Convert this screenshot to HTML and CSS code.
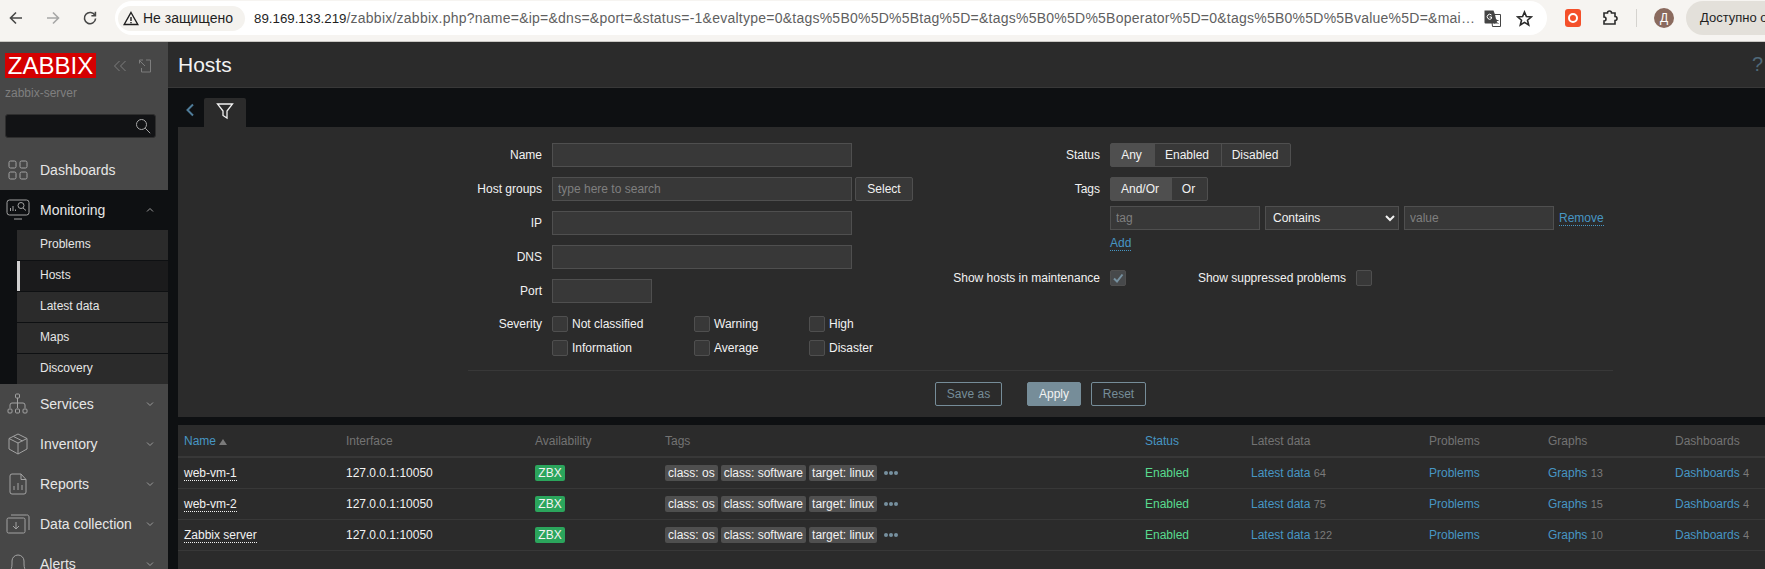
FILE: index.html
```html
<!DOCTYPE html>
<html lang="ru">

<head>
    <meta charset="UTF-8">
    <title>Hosts</title>
    <link rel="stylesheet" href="styles.css">
</head>

<body>
    <!-- browser toolbar -->
    <div class="browser-bar">
        <div class="browser-nav">
            <svg class="nav-arrow" width="16" height="16" viewBox="0 0 16 16"><path d="M14 8H2.5M8 2.5 2.5 8 8 13.5" /></svg>
            <svg class="nav-arrow nav-arrow-off" width="16" height="16" viewBox="0 0 16 16"><path d="M2 8h11.5M8 2.5 13.5 8 8 13.5" /></svg>
            <svg class="nav-arrow" width="16" height="16" viewBox="0 0 16 16"><path d="M13 5.500A5.600 5.600 0 1 0 13.600 8.500M13.400 1.800v4h-4" /></svg>
        </div>
        <div class="omnibox">
            <div class="chip">
                <svg width="16" height="15" viewBox="0 0 16 15"><path class="warn" d="M8 1.500 14.800 13.500H1.200ZM8 6v4M8 11v1.200" /></svg>
                <span>Не защищено</span>
            </div>
            <div class="url"><b>89.169.133.219</b>/zabbix/zabbix.php?name=&amp;ip=&amp;dns=&amp;port=&amp;status=-1&amp;evaltype=0&amp;tags%5B0%5D%5Btag%5D=&amp;tags%5B0%5D%5Boperator%5D=0&amp;tags%5B0%5D%5Bvalue%5D=&amp;mai…</div>
            <svg class="omni-icon" width="17" height="17" viewBox="0 0 17 17">
                <path fill="#fff" stroke="#444" d="M7 4.500h9.500v12H8.500Z" />
                <path fill="#444" d="M0.500 0.500h9l1.500 4 2 9H1.500a1 1 0 0 1-1-1Z" />
                <path fill="none" stroke="#fff" d="M7.500 5a2.500 2.500 0 1 0 0 3.500V7H5.500" />
                <path fill="none" stroke="#444" d="M10.500 10.500h4M12.500 9.500c0 2-1 3.500-2 4M11.500 11c.5 1.200 1.500 2 3 2.500" />
            </svg>
            <svg class="omni-icon star" width="17" height="17" viewBox="0 0 17 17"><path d="M8.500 2 10.400 6.600 15.300 7 11.500 10.200 12.700 15 8.500 12.400 4.300 15 5.500 10.200 1.700 7 6.600 6.600Z" /></svg>
        </div>
        <div class="browser-tools">
            <div class="ext-red"><span></span></div>
            <svg class="puzzle" width="18" height="18" viewBox="0 0 18 18"><path d="M3 4h3.500a2 2 0 0 1 4 0H14v3.500a2 2 0 0 1 0 4V15H3v-3a2 2 0 0 0 0-4Z" /></svg>
            <div class="tool-sep"></div>
            <div class="avatar">Д</div>
            <div class="update-pill">Доступно обновление</div>
        </div>
    </div>

    <div class="app">
        <aside class="sidebar">
            <div class="logo-row">
                <div class="logo">ZABBIX</div>
                <svg class="logo-icon logo-collapse" width="14" height="14" viewBox="0 0 14 14"><path d="M6.500 2 1.500 7l5 5M12.500 2l-5 5 5 5" /></svg>
                <svg class="logo-icon" width="14" height="14" viewBox="0 0 14 14"><path d="M5 1H1.500v3.500M1.500 1.500 7 7M8 1h4.500v12h-9V9" /></svg>
            </div>
            <div class="server-name">zabbix-server</div>
            <div class="search-box">
                <svg width="16" height="16" viewBox="0 0 16 16"><circle cx="6.500" cy="6.500" r="5" /><path d="m10.200 10.200 5 5" /></svg>
            </div>

            <nav class="menu">
                <div class="menu-item">
                    <svg class="menu-icon" width="22" height="22" viewBox="0 0 22 22"><rect x="2" y="2" width="7" height="7" rx="1.500" /><rect x="13" y="2" width="7" height="7" rx="1.500" /><rect x="2" y="13" width="7" height="7" rx="1.500" /><rect x="13" y="13" width="7" height="7" rx="1.500" /></svg>
                    <span>Dashboards</span>
                </div>
                <div class="menu-item menu-item-open">
                    <svg class="menu-icon" width="24" height="22" viewBox="0 0 24 22"><rect x="1" y="1" width="22" height="15" rx="2.500" /><path d="M8 20h8M4.500 12V9M7 12V7M9.500 12v-1.500" /><circle cx="15" cy="6.500" r="3" /><path d="m17 9 3 2.500" /></svg>
                    <span>Monitoring</span>
                    <svg class="chevron" width="8" height="6" viewBox="0 0 8 6"><path d="M1 4.500 4 1.500l3 3" /></svg>
                </div>
                <div class="submenu">
                    <a class="submenu-item">Problems</a>
                    <a class="submenu-item submenu-item-active">Hosts</a>
                    <a class="submenu-item">Latest data</a>
                    <a class="submenu-item">Maps</a>
                    <a class="submenu-item">Discovery</a>
                </div>
                <div class="menu-item">
                    <svg class="menu-icon" width="24" height="22" viewBox="0 0 24 22"><rect x="9.500" y="1" width="4" height="4" rx="1" /><path d="M11.500 5v5M4 15v-3a2 2 0 0 1 2-2h11a2 2 0 0 1 2 2v3M11.500 10v5" /><rect x="2" y="16" width="4" height="4" rx="1" /><rect x="9.500" y="16" width="4" height="4" rx="1" /><rect x="17" y="16" width="4" height="4" rx="1" /></svg>
                    <span>Services</span>
                    <svg class="chevron" width="8" height="6" viewBox="0 0 8 6"><path d="M1 1.500 4 4.500l3-3" /></svg>
                </div>
                <div class="menu-item">
                    <svg class="menu-icon" width="24" height="24" viewBox="0 0 24 24"><path d="M12 2 21 6.500V17L12 22 3 17V6.500ZM3 6.500 12 11 21 6.500M12 11v11M7.500 4.500 16.500 9" /></svg>
                    <span>Inventory</span>
                    <svg class="chevron" width="8" height="6" viewBox="0 0 8 6"><path d="M1 1.500 4 4.500l3-3" /></svg>
                </div>
                <div class="menu-item">
                    <svg class="menu-icon" width="24" height="24" viewBox="0 0 24 24"><path d="M6 2h9l5 5.500V20a2 2 0 0 1-2 2H6a2 2 0 0 1-2-2V4a2 2 0 0 1 2-2ZM15 2v5.500h5M8 18v-4M12 18v-7M16 18v-5" /></svg>
                    <span>Reports</span>
                    <svg class="chevron" width="8" height="6" viewBox="0 0 8 6"><path d="M1 1.500 4 4.500l3-3" /></svg>
                </div>
                <div class="menu-item">
                    <svg class="menu-icon" width="24" height="22" viewBox="0 0 24 22"><rect x="1" y="5" width="18" height="15" rx="1.500" /><path d="M5 2h15.500A2 2 0 0 1 23 4v13M10 9v7M7 13l3 3 3-3" /></svg>
                    <span>Data collection</span>
                    <svg class="chevron" width="8" height="6" viewBox="0 0 8 6"><path d="M1 1.500 4 4.500l3-3" /></svg>
                </div>
                <div class="menu-item">
                    <svg class="menu-icon" width="24" height="24" viewBox="0 0 24 24"><path d="M3 19c2-1 3-3 3-7V9a6 6 0 0 1 12 0v3c0 4 1 6 3 7ZM10 22h4" /></svg>
                    <span>Alerts</span>
                    <svg class="chevron" width="8" height="6" viewBox="0 0 8 6"><path d="M1 1.500 4 4.500l3-3" /></svg>
                </div>
            </nav>
        </aside>

        <main class="content">
            <header class="page-header">
                <h1>Hosts</h1>
                <span class="help">?</span>
            </header>

            <div class="filter-tabs">
                <svg class="tab-back" width="10" height="14" viewBox="0 0 10 14"><path d="M8 1.500 2.500 7 8 12.500" /></svg>
                <div class="filter-tab">
                    <svg width="18" height="18" viewBox="0 0 18 18"><path d="M1.500 2h15L11 9v7l-4-2.500V9Z" /></svg>
                </div>
            </div>

            <section class="filter-panel">
                <form class="filter-form">
                    <div class="filter-cols">
                        <div class="col-left">
                            <div class="form-row">
                                <label class="form-label">Name</label>
                                <input class="field field-wide" type="text">
                            </div>
                            <div class="form-row form-row-tight">
                                <label class="form-label">Host groups</label>
                                <input class="field field-wide" type="text" placeholder="type here to search">
                                <button class="btn-select" type="button">Select</button>
                            </div>
                            <div class="form-row">
                                <label class="form-label">IP</label>
                                <input class="field field-wide" type="text">
                            </div>
                            <div class="form-row">
                                <label class="form-label">DNS</label>
                                <input class="field field-wide" type="text">
                            </div>
                            <div class="form-row">
                                <label class="form-label">Port</label>
                                <input class="field field-port" type="text">
                            </div>
                            <div class="form-row form-row-severity">
                                <label class="form-label">Severity</label>
                                <div class="severity-grid">
                                    <div class="check"><i class="box"></i>Not classified</div>
                                    <div class="check"><i class="box"></i>Warning</div>
                                    <div class="check"><i class="box"></i>High</div>
                                    <div class="check"><i class="box"></i>Information</div>
                                    <div class="check"><i class="box"></i>Average</div>
                                    <div class="check"><i class="box"></i>Disaster</div>
                                </div>
                            </div>
                        </div>

                        <div class="col-right">
                            <div class="form-row">
                                <label class="form-label">Status</label>
                                <div class="segmented">
                                    <span class="seg seg-on seg-any">Any</span>
                                    <span class="seg seg-enabled">Enabled</span>
                                    <span class="seg seg-disabled">Disabled</span>
                                </div>
                            </div>
                            <div class="form-row form-row-tags">
                                <label class="form-label">Tags</label>
                                <div class="segmented">
                                    <span class="seg seg-on seg-andor">And/Or</span>
                                    <span class="seg seg-or">Or</span>
                                </div>
                            </div>
                            <div class="form-row form-row-tags">
                                <span class="form-label"></span>
                                <div class="tag-filter">
                                    <input class="field field-tag" type="text" placeholder="tag">
                                    <select class="field field-op">
                                        <option>Contains</option>
                                    </select>
                                    <input class="field field-tag" type="text" placeholder="value">
                                    <a class="dotted-link">Remove</a>
                                </div>
                            </div>
                            <div class="form-row add-row">
                                <span class="form-label"></span>
                                <a class="dotted-link">Add</a>
                            </div>
                            <div class="form-row maint-row">
                                <label class="form-label">Show hosts in maintenance</label>
                                <i class="box box-checked">
                                    <svg width="12" height="12" viewBox="0 0 12 12"><path d="M2 6.500 5 9.500 10.500 2.500" /></svg>
                                </i>
                                <label class="suppressed-label">Show suppressed problems</label>
                                <i class="box"></i>
                            </div>
                        </div>
                    </div>

                    <div class="filter-buttons">
                        <button class="btn-outline btn-saveas" type="button">Save as</button>
                        <button class="btn-apply" type="button">Apply</button>
                        <button class="btn-outline btn-reset" type="button">Reset</button>
                    </div>
                </form>
            </section>

            <section class="hosts-list">
                <table class="hosts-table">
                    <colgroup>
                        <col class="c-name"><col class="c-iface"><col class="c-avail"><col class="c-tags"><col class="c-status"><col class="c-latest"><col class="c-problems"><col class="c-graphs"><col>
                    </colgroup>
                    <thead>
                        <tr>
                            <th class="sort-link">Name <i class="sort-up"></i></th>
                            <th>Interface</th>
                            <th>Availability</th>
                            <th>Tags</th>
                            <th class="sort-link">Status</th>
                            <th>Latest data</th>
                            <th>Problems</th>
                            <th>Graphs</th>
                            <th>Dashboards</th>
                        </tr>
                    </thead>
                    <tbody>
                        <tr>
                            <td><a class="host-link">web-vm-1</a></td>
                            <td>127.0.0.1:10050</td>
                            <td><span class="zbx">ZBX</span></td>
                            <td class="tags-cell"><span class="tag">class: os</span><span class="tag">class: software</span><span class="tag">target: linux</span><span class="more"><i></i><i></i><i></i></span></td>
                            <td class="enabled">Enabled</td>
                            <td><a class="link">Latest data</a> <sup>64</sup></td>
                            <td><a class="link">Problems</a></td>
                            <td><a class="link">Graphs</a> <sup>13</sup></td>
                            <td><a class="link">Dashboards</a> <sup>4</sup></td>
                        </tr>
                        <tr>
                            <td><a class="host-link">web-vm-2</a></td>
                            <td>127.0.0.1:10050</td>
                            <td><span class="zbx">ZBX</span></td>
                            <td class="tags-cell"><span class="tag">class: os</span><span class="tag">class: software</span><span class="tag">target: linux</span><span class="more"><i></i><i></i><i></i></span></td>
                            <td class="enabled">Enabled</td>
                            <td><a class="link">Latest data</a> <sup>75</sup></td>
                            <td><a class="link">Problems</a></td>
                            <td><a class="link">Graphs</a> <sup>15</sup></td>
                            <td><a class="link">Dashboards</a> <sup>4</sup></td>
                        </tr>
                        <tr>
                            <td><a class="host-link">Zabbix server</a></td>
                            <td>127.0.0.1:10050</td>
                            <td><span class="zbx">ZBX</span></td>
                            <td class="tags-cell"><span class="tag">class: os</span><span class="tag">class: software</span><span class="tag">target: linux</span><span class="more"><i></i><i></i><i></i></span></td>
                            <td class="enabled">Enabled</td>
                            <td><a class="link">Latest data</a> <sup>122</sup></td>
                            <td><a class="link">Problems</a></td>
                            <td><a class="link">Graphs</a> <sup>10</sup></td>
                            <td><a class="link">Dashboards</a> <sup>4</sup></td>
                        </tr>
                    </tbody>
                </table>
            </section>
        </main>
    </div>
</body>

</html>
```

FILE: styles.css
```css
* {
    box-sizing: border-box;
}

html,
body {
    height: 569px;
    margin: 0;
    overflow: hidden;
}

body {
    font-family: "Liberation Sans", Arial, sans-serif;
    font-size: 12px;
    color: #f2f2f2;
    background-color: #0e1012;
}

/* browser toolbar */
.browser-bar {
    display: flex;
    align-items: flex-start;
    height: 42px;
    padding-top: 1px;
    background-color: #f6f4f1;
    border-bottom: 1px solid #c9c7c3;
    color: #1f1f1f;
}

.browser-nav {
    display: flex;
    align-items: center;
    gap: 21px;
    width: 115px;
    height: 34px;
    padding-left: 8px;
}

.nav-arrow {
    fill: none;
    stroke: #474747;
    stroke-width: 1.6;
}

.nav-arrow-off {
    stroke: #a6a6a6;
}

.omnibox {
    display: flex;
    align-items: center;
    flex-shrink: 0;
    width: 1432px;
    height: 34px;
    padding: 0 14px 0 3px;
    background-color: #fff;
    border-radius: 17px;
}

.chip {
    display: flex;
    align-items: center;
    gap: 4px;
    flex-shrink: 0;
    width: 127px;
    height: 25px;
    padding-left: 5px;
    margin-right: 9px;
    background-color: #f4f2ee;
    border-radius: 13px;
    font-size: 14px;
}

.warn {
    fill: none;
    stroke: #1f1f1f;
    stroke-width: 1.4;
}

.url {
    flex: 1;
    min-width: 0;
    white-space: nowrap;
    font-size: 14px;
    letter-spacing: 0.24px;
    color: #5f5f5f;
}

.url b {
    font-size: 13.3px;
    font-weight: normal;
    letter-spacing: 0;
    color: #1f1f1f;
}

.omni-icon {
    flex-shrink: 0;
    margin-left: 15px;
}

.star {
    margin-left: 15px;
    fill: none;
    stroke: #2b2b2b;
    stroke-width: 1.6;
}

.browser-tools {
    display: flex;
    align-items: center;
    flex: 1;
    height: 34px;
    min-width: 0;
    overflow: hidden;
    padding-left: 18px;
}

.ext-red {
    display: flex;
    align-items: center;
    justify-content: center;
    flex-shrink: 0;
    width: 16px;
    height: 18px;
    background-color: #f4502a;
    border-radius: 3px;
}

.ext-red span {
    width: 10px;
    height: 10px;
    border: 2px solid #fff;
    border-radius: 50%;
}

.puzzle {
    flex-shrink: 0;
    margin-left: 20px;
    fill: none;
    stroke: #2b2b2b;
    stroke-width: 1.6;
}

.tool-sep {
    flex-shrink: 0;
    width: 1px;
    height: 18px;
    margin-left: 17px;
    background-color: #d5d3cf;
}

.avatar {
    flex-shrink: 0;
    width: 20px;
    height: 20px;
    margin-left: 17px;
    border-radius: 50%;
    background-color: #8a6a5e;
    color: #fff;
    font-size: 12px;
    line-height: 20px;
    text-align: center;
}

.update-pill {
    flex-shrink: 0;
    width: 180px;
    height: 34px;
    margin-left: 12px;
    padding-left: 14px;
    background-color: #e3e0da;
    border-radius: 17px;
    font-size: 13px;
    line-height: 34px;
    white-space: nowrap;
}

/* app */
.app {
    display: flex;
    height: 527px;
}

.sidebar {
    flex-shrink: 0;
    width: 168px;
    height: 100%;
    overflow: hidden;
    background-color: #474747;
}

.logo-row {
    display: flex;
    align-items: center;
    padding: 11px 0 0 5px;
}

.logo {
    width: 91px;
    height: 25px;
    background-color: #d40000;
    color: #fff;
    font-size: 24px;
    line-height: 25px;
    text-align: center;
}

.logo-icon {
    margin-left: 11px;
    fill: none;
    stroke: #7d7d7d;
    stroke-width: 1;
}

.logo-collapse {
    margin-left: 17px;
}

.server-name {
    padding: 8px 0 0 5px;
    height: 23px;
    color: #7f7f7f;
}

.search-box {
    display: flex;
    align-items: center;
    justify-content: flex-end;
    width: 151px;
    height: 24px;
    margin: 13px 0 12px 5px;
    padding-right: 4px;
    background-color: #121315;
    border: 1px solid #2e2e2e;
    border-radius: 3px;
}

.search-box svg {
    fill: none;
    stroke: #a8a8a8;
    stroke-width: 1;
}

.menu-item {
    display: flex;
    align-items: center;
    height: 40px;
    font-size: 14px;
    color: #e6e6e6;
}

.menu-item span {
    flex: 1;
}

.menu-icon {
    flex-shrink: 0;
    width: 24px;
    margin: 0 10px 0 6px;
    fill: none;
    stroke: #a3a3a3;
    stroke-width: 1;
}

.chevron {
    margin-right: 14px;
    fill: none;
    stroke: #9a9a9a;
    stroke-width: 1;
}

.menu-item-open {
    background-color: #0e1012;
}

.submenu {
    display: flex;
    flex-direction: column;
    gap: 1px;
    height: 154px;
    padding-left: 17px;
    background-color: #0e1012;
}

.submenu-item {
    display: block;
    height: 30px;
    padding-left: 23px;
    background-color: #2b2b2b;
    color: #e6e6e6;
    line-height: 29px;
}

.submenu-item-active {
    padding-left: 20px;
    background-color: #1b1b1c;
    border-left: 3px solid #d0d0d0;
}

/* content */
.content {
    flex: 1;
    min-width: 0;
    height: 100%;
    overflow: hidden;
}

.page-header {
    display: flex;
    align-items: center;
    justify-content: space-between;
    height: 46px;
    padding: 0 2px 0 10px;
    background-color: #2b2b2b;
    border-bottom: 1px solid #383838;
}

.page-header h1 {
    margin: 0;
    font-size: 21px;
    font-weight: normal;
    color: #f2f2f2;
}

.help {
    font-size: 20px;
    color: #4f6878;
}

.filter-tabs {
    display: flex;
    align-items: flex-end;
    height: 39px;
    padding-left: 17px;
}

.tab-back {
    align-self: center;
    margin: 4px 9px 0 0;
    fill: none;
    stroke: #4f7c99;
    stroke-width: 2;
}

.filter-tab {
    display: flex;
    align-items: center;
    justify-content: center;
    width: 42px;
    height: 29px;
    padding-bottom: 4px;
    background-color: #2b2b2b;
    border-radius: 2px 2px 0 0;
}

.filter-tab svg {
    fill: none;
    stroke: #f2f2f2;
    stroke-width: 1.3;
}

.filter-panel {
    height: 290px;
    margin-left: 10px;
    padding: 16px 0 0 290px;
    background-color: #2b2b2b;
}

.filter-form {
    width: 1145px;
}

.filter-cols {
    display: flex;
    height: 228px;
    border-bottom: 1px solid #383838;
}

.col-left {
    width: 486px;
    flex-shrink: 0;
}

.form-row {
    display: flex;
    align-items: center;
    gap: 10px;
    height: 24px;
    margin-bottom: 10px;
}

.form-row-tight {
    gap: 3px;
}

.form-row-tight .form-label {
    margin-right: 7px;
}

.form-label {
    flex-shrink: 0;
    width: 74px;
    color: #f2f2f2;
    text-align: right;
    white-space: nowrap;
}

.col-right .form-label {
    width: 146px;
}

.field {
    height: 24px;
    padding: 0 5px;
    background-color: #383838;
    border: 1px solid #4f4f4f;
    color: #f2f2f2;
    font-family: inherit;
    font-size: 12px;
    border-radius: 0;
    outline: none;
}

.field::placeholder {
    color: #7f7f7f;
    opacity: 1;
}

.field-wide {
    width: 300px;
}

.field-port {
    width: 100px;
}

.btn-select {
    width: 58px;
    height: 24px;
    padding: 0;
    background-color: #383838;
    border: 1px solid #4f4f4f;
    border-radius: 2px;
    color: #f2f2f2;
    font-family: inherit;
    font-size: 12px;
}

.form-row-severity {
    align-items: flex-start;
    height: 40px;
    margin-top: 13px;
}

.form-row-severity .form-label {
    line-height: 16px;
}

.severity-grid {
    display: grid;
    grid-template-columns: 142px 115px auto;
    row-gap: 8px;
}

.check {
    display: flex;
    align-items: center;
    gap: 4px;
    height: 16px;
}

.box {
    display: flex;
    align-items: center;
    justify-content: center;
    flex-shrink: 0;
    width: 16px;
    height: 16px;
    background-color: #383838;
    border: 1px solid #4f4f4f;
    border-radius: 2px;
}

.box svg {
    fill: none;
    stroke: #76909f;
    stroke-width: 2;
}

.box-checked {
    background-color: #47494b;
}

.segmented {
    display: flex;
    height: 24px;
    background-color: #383838;
    border: 1px solid #4f4f4f;
    border-radius: 2px;
}

.seg {
    display: block;
    padding-right: 2px;
    line-height: 22px;
    text-align: center;
    border-left: 1px solid #4f4f4f;
}

.seg:first-child {
    border-left: none;
}

.seg-on {
    background-color: #4f4f4f;
}

.seg-any {
    width: 43px;
}

.seg-enabled {
    width: 67px;
}

.seg-disabled {
    width: 69px;
}

.seg-andor {
    width: 60px;
}

.seg-or {
    width: 36px;
}

.form-row-tags {
    margin-bottom: 5px;
}

.tag-filter {
    display: flex;
    align-items: center;
    gap: 5px;
}

.field-tag {
    width: 150px;
}

.field-op {
    width: 134px;
    padding: 0 0 0 3px;
}

.dotted-link {
    color: #4796c4;
    border-bottom: 1px dotted #4796c4;
    line-height: 14px;
}

.add-row {
    height: 16px;
    margin-bottom: 0;
    padding-top: 1px;
}

.maint-row {
    height: 16px;
    margin-top: 19px;
}

.col-right .maint-row .form-label {
    width: 149px;
    margin-left: -3px;
}

.suppressed-label {
    width: 210px;
    text-align: right;
    white-space: nowrap;
    margin-left: 0;
}

.filter-buttons {
    display: flex;
    padding: 11px 0 0 467px;
}

.btn-outline,
.btn-apply {
    height: 24px;
    padding: 0;
    border-radius: 2px;
    font-family: inherit;
    font-size: 12px;
}

.btn-outline {
    background-color: transparent;
    border: 1px solid #768d99;
    color: #768d99;
}

.btn-saveas {
    width: 67px;
    margin-right: 25px;
}

.btn-apply {
    width: 54px;
    margin-right: 10px;
    background-color: #768d99;
    border: 1px solid #768d99;
    color: #f2f2f2;
}

.btn-reset {
    width: 55px;
}

/* hosts table */
.hosts-list {
    height: 144px;
    margin: 8px 0 0 10px;
    background-color: #2b2b2b;
}

.hosts-table {
    width: 100%;
    table-layout: fixed;
    border-collapse: collapse;
}

.c-name {
    width: 162px;
}

.c-iface {
    width: 189px;
}

.c-avail {
    width: 130px;
}

.c-tags {
    width: 480px;
}

.c-status {
    width: 106px;
}

.c-latest {
    width: 178px;
}

.c-problems {
    width: 119px;
}

.c-graphs {
    width: 127px;
}

.hosts-table th {
    height: 32px;
    padding: 0 6px;
    color: #737373;
    font-weight: normal;
    text-align: left;
    border-bottom: 2px solid #383838;
}

.hosts-table th.sort-link {
    color: #4796c4;
}

.sort-up {
    display: inline-block;
    width: 0;
    height: 0;
    border-left: 4px solid transparent;
    border-right: 4px solid transparent;
    border-bottom: 6px solid #7a7a7a;
}

.hosts-table td {
    height: 31px;
    padding: 0 6px;
    color: #f2f2f2;
    border-bottom: 1px solid #383838;
    white-space: nowrap;
}

.host-link {
    border-bottom: 1px dotted #f2f2f2;
}

.zbx {
    display: inline-block;
    width: 30px;
    height: 16px;
    background-color: #2ba55c;
    border-radius: 2px;
    line-height: 16px;
    text-align: center;
}

.tags-cell {
    font-size: 0;
}

.tag {
    display: inline-block;
    height: 16px;
    margin-right: 3px;
    padding: 0 3px;
    background-color: #4f4f4f;
    border-radius: 2px;
    font-size: 12px;
    line-height: 16px;
    vertical-align: middle;
}

.more {
    display: inline-flex;
    gap: 1px;
    margin-left: 4px;
    vertical-align: middle;
}

.more i {
    width: 4px;
    height: 4px;
    background-color: #76909f;
    border-radius: 50%;
}

.hosts-table td.enabled {
    color: #59db8f;
}

.link {
    color: #4796c4;
}

.hosts-table sup {
    color: #7a7a7a;
    font-size: 11px;
    vertical-align: baseline;
}
```
